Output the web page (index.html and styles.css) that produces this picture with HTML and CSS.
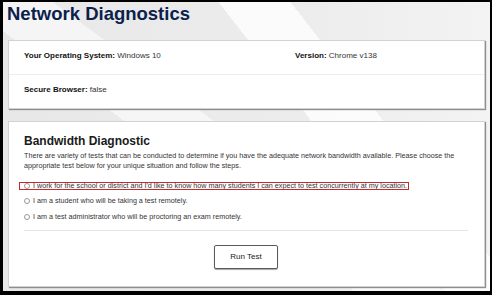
FILE: index.html
```html
<!DOCTYPE html>
<html lang="en">
<head>
<meta charset="utf-8">
<title>Network Diagnostics</title>
<link rel="stylesheet" href="styles.css">
</head>
<body>
<div class="page">
  <h1 class="title">Network Diagnostics</h1>

  <section class="card info-card">
    <div class="info-row">
      <div class="info-item"><span class="info-label">Your Operating System:</span> Windows 10</div>
      <div class="info-item"><span class="info-label">Version:</span> Chrome v138</div>
    </div>
    <div class="info-row">
      <div class="info-item"><span class="info-label">Secure Browser:</span> false</div>
    </div>
  </section>

  <section class="card bandwidth-card">
    <h2 class="card-title">Bandwidth Diagnostic</h2>
    <p class="card-text">There are variety of tests that can be conducted to determine if you have the adequate network bandwidth available. Please choose the appropriate test below for your unique situation and follow the steps.</p>
    <div class="options">
      <div class="option">
        <label class="option-label flagged"><input type="radio" name="test" class="radio"><span>I work for the school or district and I'd like to know how many students I can expect to test concurrently at my location.</span></label>
      </div>
      <div class="option">
        <label class="option-label"><input type="radio" name="test" class="radio"><span>I am a student who will be taking a test remotely.</span></label>
      </div>
      <div class="option">
        <label class="option-label"><input type="radio" name="test" class="radio"><span>I am a test administrator who will be proctoring an exam remotely.</span></label>
      </div>
    </div>
    <hr class="divider">
    <div class="actions">
      <button class="btn" type="button">Run Test</button>
    </div>
  </section>
</div>
</body>
</html>
```
FILE: styles.css
```css
html, body {
  margin: 0;
  padding: 0;
  background: #000;
}

.page {
  box-sizing: border-box;
  width: 492px;
  height: 295px;
  border-style: solid;
  border-color: #000;
  border-width: 2px 2px 4px 3px;
  padding: 0 5px;
  overflow: hidden;
  font-family: "Liberation Sans", Arial, sans-serif;
  background:
    linear-gradient(52deg, transparent 0 61.9%, rgba(255,255,255,0.8) 61.9% 72%, transparent 72%),
    linear-gradient(36.5deg, transparent 0 40%, rgba(255,255,255,0.55) 40% 50.2%, transparent 50.2%),
    linear-gradient(90deg, #e8e8e8 0%, #ececec 60%, #f3f3f3 100%);
}

.title {
  margin: 1px 0 16px -1px;
  font-size: 18.5px;
  line-height: 21px;
  font-weight: 700;
  color: #0c1f4d;
}

.card {
  background: #fff;
  border: 1px solid #d2d2d2;
  box-shadow: 1px 1px 1px #8e8e8e;
}

.info-row {
  display: grid;
  grid-template-columns: 271px 1fr;
  padding: 10px 15px 13px;
  font-size: 8px;
  line-height: 10px;
  color: #333;
}

.info-row + .info-row {
  border-top: 1px solid #ededed;
}

.info-label {
  font-weight: 700;
  color: #111;
}

.bandwidth-card {
  margin-top: 12px;
  padding: 12px 16px 17px 15px;
}

.card-title {
  margin: 0;
  font-size: 12px;
  line-height: 14px;
  font-weight: 700;
  color: #1a1a1a;
}

.card-text {
  margin: 3px 0 0;
  font-size: 7.2px;
  line-height: 10px;
  color: #333;
}

.options {
  margin-top: 7px;
}

.option {
  display: flex;
  align-items: center;
  height: 15.5px;
  font-size: 7.2px;
  color: #333;
}

.option-label {
  display: inline-flex;
  align-items: center;
  gap: 3px;
  height: 6.5px;
  line-height: 6.5px;
}

.flagged {
  outline: 1.5px solid #c62a2f;
  padding: 0 0.5px 0 4px;
  margin-left: -4px;
}

.radio {
  appearance: none;
  -webkit-appearance: none;
  box-sizing: border-box;
  width: 6px;
  height: 6px;
  margin: 0;
  border: 0.8px solid #9a9a9a;
  border-radius: 50%;
  background: #fff;
  flex: none;
}

.divider {
  margin: 5px 0 0;
  border: 0;
  border-top: 1px solid #e6e6e6;
}

.actions {
  display: flex;
  justify-content: center;
  margin-top: 14px;
}

.btn {
  box-sizing: border-box;
  width: 64px;
  height: 24px;
  padding: 0;
  background: #fff;
  border: 1px solid #5a5a5a;
  border-radius: 2px;
  box-shadow: 0 1px 1px rgba(0,0,0,0.35);
  font-family: "Liberation Sans", Arial, sans-serif;
  font-size: 8px;
  color: #222;
}
```
